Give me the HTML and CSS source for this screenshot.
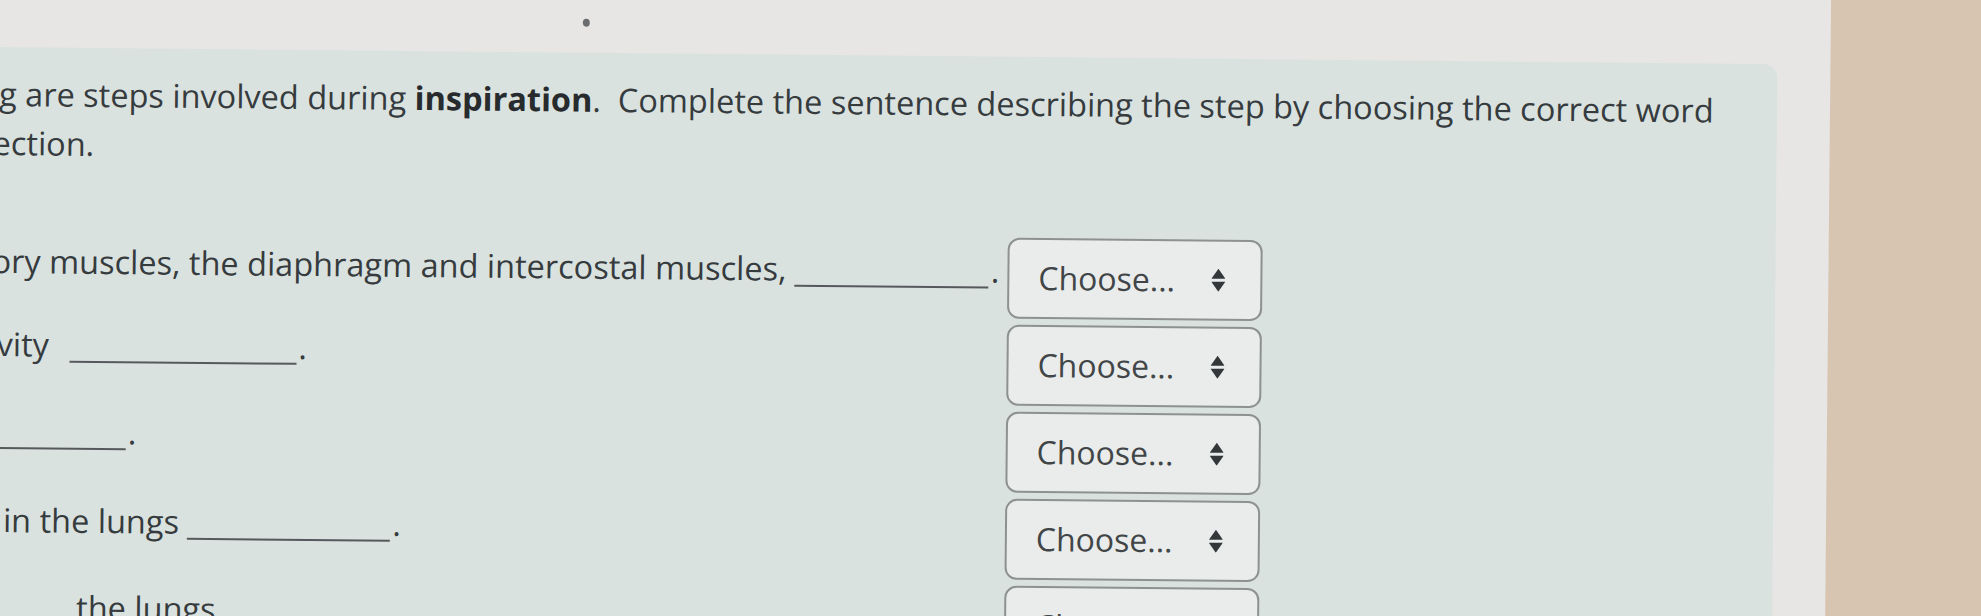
FILE: index.html
```html
<!DOCTYPE html>
<html lang="en">
<head>
<meta charset="utf-8">
<title>Inspiration steps</title>
<link rel="stylesheet" href="styles.css">
</head>
<body>
<div class="screen">
  <div class="page">
    <div class="bezel"><span class="cam"></span></div>
    <section class="panel">
      <p class="intro">g are steps involved during <b>inspiration</b>.&nbsp; Complete the sentence describing the step by choosing the correct word<br><span class="cut">ection.</span></p>
      <div class="rows">
        <div class="row r1">
          <div class="sentence"><span class="cut">ory muscles, the diaphragm and intercostal muscles,</span> <span class="blank short"></span>.</div>
          <div class="select"><span>Choose...</span><svg class="arrows" viewBox="0 0 14 23" width="14" height="23"><path d="M7 0 L14 10 L0 10 Z"/><path d="M0 13 L14 13 L7 23 Z"/></svg></div>
        </div>
        <div class="row r2">
          <div class="sentence">vity <span class="blank wide"></span>.</div>
          <div class="select"><span>Choose...</span><svg class="arrows" viewBox="0 0 14 23" width="14" height="23"><path d="M7 0 L14 10 L0 10 Z"/><path d="M0 13 L14 13 L7 23 Z"/></svg></div>
        </div>
        <div class="row r3">
          <div class="sentence"><span class="blank lead"></span>.</div>
          <div class="select"><span>Choose...</span><svg class="arrows" viewBox="0 0 14 23" width="14" height="23"><path d="M7 0 L14 10 L0 10 Z"/><path d="M0 13 L14 13 L7 23 Z"/></svg></div>
        </div>
        <div class="row r4">
          <div class="sentence">in the lungs <span class="blank"></span>.</div>
          <div class="select"><span>Choose...</span><svg class="arrows" viewBox="0 0 14 23" width="14" height="23"><path d="M7 0 L14 10 L0 10 Z"/><path d="M0 13 L14 13 L7 23 Z"/></svg></div>
        </div>
        <div class="row r5">
          <div class="sentence">the lungs</div>
          <div class="select"><span>Choose...</span><svg class="arrows" viewBox="0 0 14 23" width="14" height="23"><path d="M7 0 L14 10 L0 10 Z"/><path d="M0 13 L14 13 L7 23 Z"/></svg></div>
        </div>
      </div>
    </section>
  </div>
  <div class="desk"></div>
</div>
</body>
</html>
```
FILE: styles.css
```css
html, body {
  margin: 0;
  padding: 0;
}
body {
  width: 1981px;
  height: 616px;
  overflow: hidden;
  background: #e7e6e4;
  font-family: "Open Sans", "Noto Sans", sans-serif;
  color: #363b3e;
}
.screen {
  display: flex;
  width: 2200px;
  height: 800px;
  margin-top: -40px;
  transform: rotate(0.55deg);
  transform-origin: 0 40px;
}
.page {
  width: 1831px;
  flex: 0 0 1831px;
  background: #e7e6e4;
  display: flex;
  flex-direction: column;
}
.bezel {
  height: 87px;
  flex: 0 0 87px;
  display: flex;
  align-items: flex-start;
}
.cam {
  width: 7px;
  height: 8px;
  border-radius: 50%;
  background: #6a6c6d;
  margin: 53px 0 0 583px;
}
.panel {
  flex: 1;
  width: 1778px;
  background: #dae2e0;
  border-top-right-radius: 14px;
  padding-top: 22px;
  box-sizing: border-box;
}
.intro {
  margin: 0;
  font-size: 32.5px;
  line-height: 49px;
  white-space: nowrap;
}
.intro b {
  font-weight: 700;
  color: #272b2d;
}
.cut {
  margin-left: -6px;
}
.rows {
  display: flex;
  flex-direction: column;
  gap: 6px;
  margin-top: 61px;
}
.row {
  display: flex;
  align-items: flex-start;
}
.sentence {
  flex: 0 0 1010px;
  min-width: 0;
  box-sizing: border-box;
  font-size: 32.5px;
  line-height: 49px;
  padding-top: 4px;
  white-space: nowrap;
}
.r1 .sentence { padding-top: 8px; }
.r4 .sentence { padding-left: 8px; padding-top: 6px; }
.r5 .sentence { padding-left: 82px; padding-top: 6px; }
.blank {
  display: inline-block;
  width: 203px;
  height: 0;
  border-bottom: 2px solid #55595b;
  vertical-align: -6px;
  margin-right: 2px;
}
.blank.short { width: 194px; }
.blank.wide { width: 227px; margin-left: 12px; }
.blank.lead { width: 210px; margin-left: -80px; }
.select {
  flex: 0 0 255px;
  height: 81px;
  box-sizing: border-box;
  border: 2px solid #8d9291;
  border-radius: 12px;
  background: #e9eceb;
  display: flex;
  align-items: center;
  justify-content: space-between;
  padding: 0 35px 2px 29px;
  font-size: 32px;
  color: #414547;
}
.arrows {
  fill: #33373a;
  margin-top: 2px;
}
.desk {
  flex: 1;
  background: #d7c4b1;
}
```
